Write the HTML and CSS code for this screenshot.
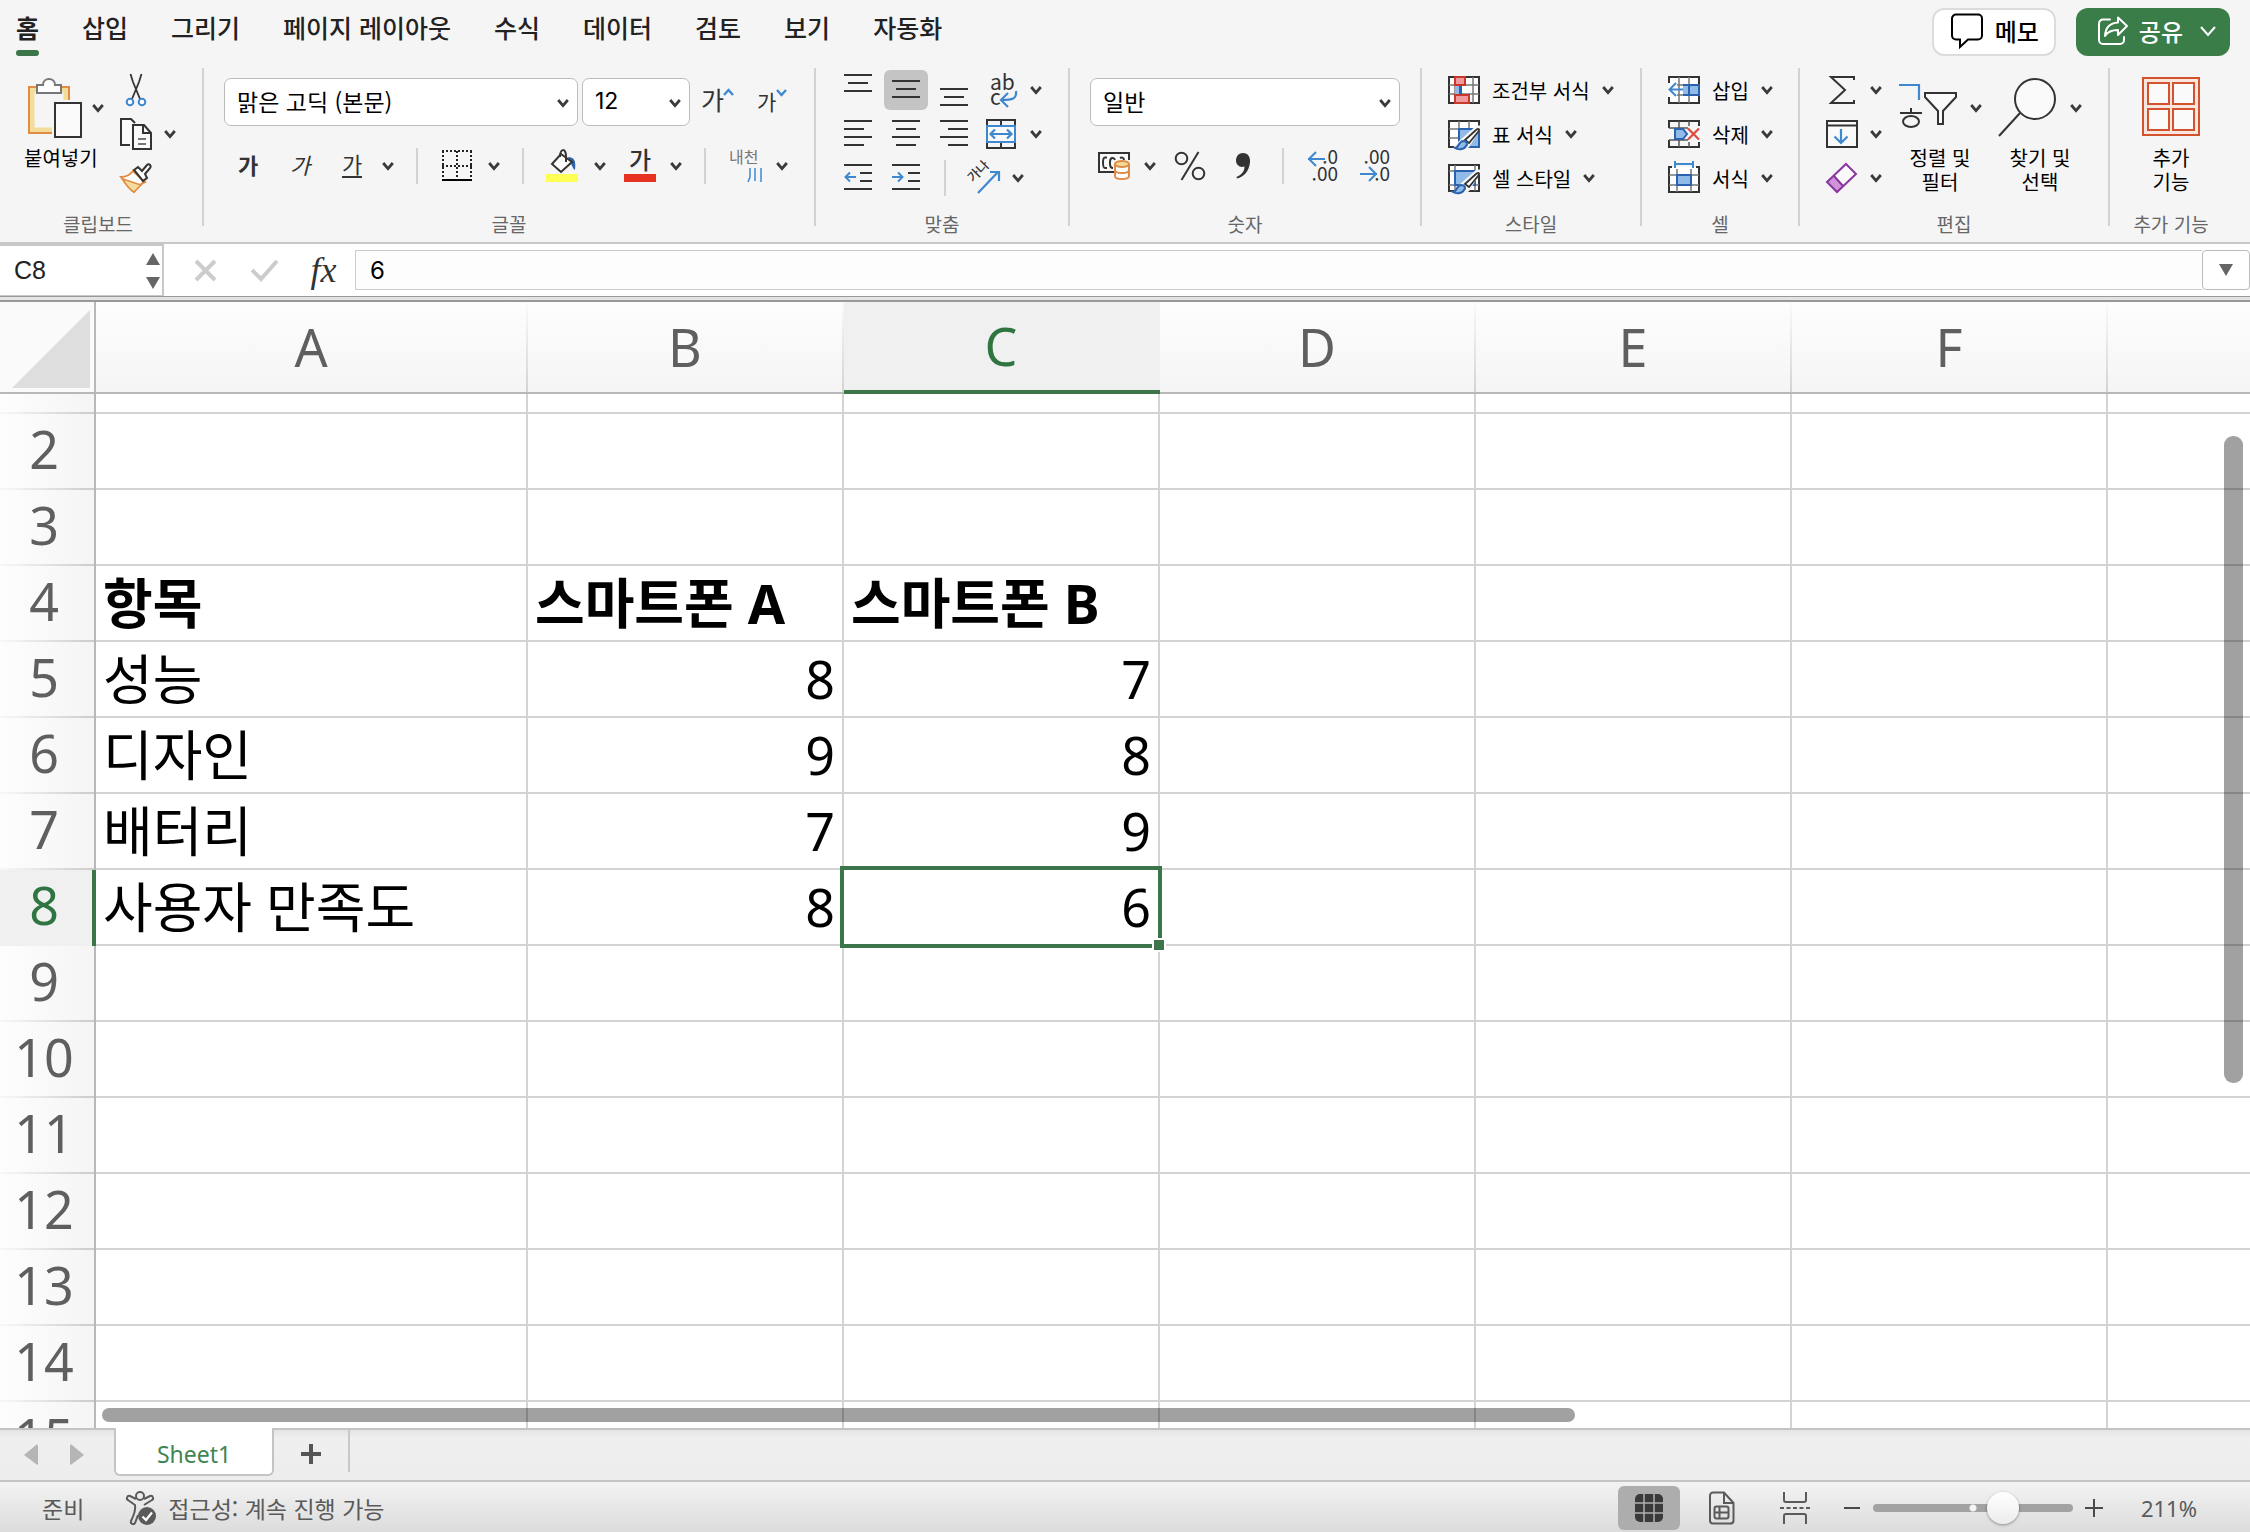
FILE: index.html
```html
<!DOCTYPE html>
<html lang="ko">
<head>
<meta charset="utf-8">
<title>Sheet1</title>
<link rel="stylesheet" href="styles.css">
</head>
<body>
<svg class="defs" aria-hidden="true">
  <symbol id="chev" viewBox="0 0 12 10"><path d="M1.2 2 6 7.600 10.800 2" fill="none" stroke="currentColor" stroke-width="2.800"/></symbol>
</svg>

<header class="topbar">
  <nav class="tabs" role="tablist">
    <button class="tab active" role="tab">홈</button>
    <button class="tab" role="tab">삽입</button>
    <button class="tab" role="tab">그리기</button>
    <button class="tab" role="tab">페이지 레이아웃</button>
    <button class="tab" role="tab">수식</button>
    <button class="tab" role="tab">데이터</button>
    <button class="tab" role="tab">검토</button>
    <button class="tab" role="tab">보기</button>
    <button class="tab" role="tab">자동화</button>
  </nav>
  <div class="actions">
    <button class="pill memo">
      <svg width="32" height="36" viewBox="0 0 32 36"><path d="M5 1.500h22a4 4 0 0 1 4 4v17a4 4 0 0 1-4 4H17l-8 7.500v-7.500H5a4 4 0 0 1-4-4v-17a4 4 0 0 1 4-4z" fill="none" stroke="#000" stroke-width="2"/></svg>
      메모
    </button>
    <button class="pill share">
      <svg width="30" height="30" viewBox="0 0 30 30"><g fill="none" stroke="#fff" stroke-width="2" stroke-linejoin="round" stroke-linecap="round"><path d="M12 3.500H5a4 4 0 0 0-4 4V24a4 4 0 0 0 4 4h17a4 4 0 0 0 4-4v-3"/><path d="M20 1.500 29 10l-9 9v-5c-6 0-10 1-13 6 .5-8 5-13 13-13.500z"/></g></svg>
      공유
      <svg class="share-chev" width="16" height="12" viewBox="0 0 16 12"><path d="M1 2l7 8 7-8" fill="none" stroke="#fff" stroke-width="2"/></svg>
    </button>
  </div>
</header>

<section class="ribbon">
  <div class="group g-clip">
    <div class="controls split">
      <button class="big paste">
        <span class="big-icon">
          <svg width="64" height="60" viewBox="0 0 64 60">
            <path d="M13 12H8v40h20M38 12h4v10" fill="none" stroke="#f4dc9a" stroke-width="5"/>
            <path d="M13 9H5v46h23M37 9h8v13" fill="none" stroke="#df8c45" stroke-width="2"/>
            <path d="M13 15V7h6c0-8 12-8 12 0h6v8z" fill="#fff" stroke="#777" stroke-width="2"/>
            <path d="M31 25h26v34H31z" fill="#fafafa" stroke="#333" stroke-width="2"/>
          </svg>
          <svg class="chev"><use href="#chev"/></svg>
        </span>
        <span>붙여넣기</span>
      </button>
      <div class="stack">
        <button class="ic" aria-label="잘라내기"><svg width="32" height="34" viewBox="0 0 32 34"><path d="M10.500 1 13 9l7 17M21.500 1 19 9l-7 17" fill="none" stroke="#333" stroke-width="1.800"/><g fill="#fff" stroke="#3f88cf" stroke-width="2"><circle cx="10" cy="29" r="3.300"/><circle cx="22" cy="29" r="3.300"/></g></svg></button><span></span>
        <button class="ic" aria-label="복사"><svg width="32" height="34" viewBox="0 0 32 34"><g fill="#fafafa" stroke="#333" stroke-width="2"><path d="M10 28H1V2h10l4 4"/><path d="M13 8h11l7 8v16H13zM23 8v8h8"/></g><path d="M18 22h8M18 27h8" stroke="#777" stroke-width="2"/></svg></button><svg class="chev"><use href="#chev"/></svg>
        <button class="ic" aria-label="서식 복사"><svg width="32" height="32" viewBox="0 0 32 32"><path d="M1 15c5 0 9-2 12-6l12 11c-5 2-8 5-11 10C9 27 5 21 1 15z" fill="#fff" stroke="#df8c45" stroke-width="2"/><path d="M3 17l18 6-7 7C9 27 6 23 3 17z" fill="#f4dc9a" stroke="#df8c45" stroke-width="1.500"/><path d="M14 8l4-3 4 4 5-6c2-2 5 1 3 3l-5 6 2 4-4 3z" fill="#fff" stroke="#333" stroke-width="2"/></svg></button><span></span>
      </div>
    </div>
    <div class="label">클립보드</div>
  </div>
  <div class="divider"></div>

  <div class="group g-font">
    <div class="controls two-row">
      <div class="combos">
        <span class="combo font-name"><select aria-label="글꼴"><option>맑은 고딕 (본문)</option></select><svg class="chev"><use href="#chev"/></svg></span>
        <span class="combo font-size"><select aria-label="글꼴 크기"><option>12</option></select><svg class="chev"><use href="#chev"/></svg></span>
        <button class="ic grow" aria-label="글꼴 크게"><svg width="34" height="30" viewBox="0 0 34 30"><text x="-1" y="23" font-size="25" class="kt">가</text><path d="M22 8l4.500-5L31 8" fill="none" stroke="#3f88cf" stroke-width="2.400"/></svg></button>
        <button class="ic" aria-label="글꼴 작게"><svg width="32" height="30" viewBox="0 0 32 30"><text x="-1" y="23" font-size="21" class="kt">가</text><path d="M19 3l4.500 5L28 3" fill="none" stroke="#3f88cf" stroke-width="2.400"/></svg></button>
      </div>
      <div class="font-row">
        <button class="ic ga b">가</button>
        <button class="ic ga i">가</button>
        <button class="ic ga u"><span>가</span></button>
        <svg class="chev"><use href="#chev"/></svg>
        <i class="sep"></i>
        <button class="ic" aria-label="테두리"><svg width="30" height="32" viewBox="0 0 30 32"><path d="M0 1h30M0 16h30M1 1v28M15 1v28M29 1v28" stroke="#222" stroke-width="2" stroke-dasharray="2 2" fill="none"/><path d="M0 30h30" stroke="#000" stroke-width="2"/></svg></button>
        <svg class="chev"><use href="#chev"/></svg>
        <i class="sep"></i>
        <button class="ic" aria-label="채우기 색"><svg width="32" height="34" viewBox="0 0 32 34"><path d="M0 25h32v8H0z" fill="#ffff54"/><path d="M22 8c7 0 8 5 7 13-3-2-3-6-5-8z" fill="#2b62ad"/><path d="M6 15 15 5l11 8-11 10z" fill="#fafafa" stroke="#333" stroke-width="2"/><path d="M14 8c0-9 6-9 6-1v6" fill="none" stroke="#333" stroke-width="2"/></svg></button>
        <svg class="chev"><use href="#chev"/></svg>
        <button class="ic" aria-label="글꼴 색"><svg width="32" height="34" viewBox="0 0 32 34"><path d="M0 25h32v8H0z" fill="#e83323"/><text x="5" y="20" font-size="24" font-weight="500" class="kt">가</text></svg></button>
        <svg class="chev"><use href="#chev"/></svg>
        <i class="sep"></i>
        <button class="ic" aria-label="윗주"><svg width="36" height="36" viewBox="0 0 36 36"><text x="1" y="15" font-size="16" class="kt light">내천</text><path d="M22 20v9l-2 5M27 20v13M33 20v14" fill="none" stroke="#3f88cf" stroke-width="1.500"/></svg></button>
        <svg class="chev"><use href="#chev"/></svg>
      </div>
    </div>
    <div class="label">글꼴</div>
  </div>
  <div class="divider"></div>

  <div class="group g-align">
    <div class="controls align">
      <div class="arow">
        <button class="ic" aria-label="위쪽 맞춤"><svg class="ln" width="28" height="32" viewBox="0 0 28 32"><path d="M0 1h28M4 9h20M0 17h28"/></svg></button>
        <button class="ic on" aria-label="가운데 맞춤"><svg class="ln" width="28" height="32" viewBox="0 0 28 32"><path d="M0 7h28M4 15h20M0 23h28"/></svg></button>
        <button class="ic" aria-label="아래쪽 맞춤"><svg class="ln" width="28" height="32" viewBox="0 0 28 32"><path d="M0 15h28M4 23h20M0 31h28"/></svg></button>
        <button class="ic wide" aria-label="줄 바꿈"><svg width="30" height="36" viewBox="0 0 30 36"><text x="4" y="18" font-size="21" class="lt">ab</text><text x="4" y="33" font-size="21" class="lt">c</text><path d="M30 19c1 8-4 9-14 9M22 21l-7 7 7 7" fill="none" stroke="#3f88cf" stroke-width="2.200"/></svg></button>
        <svg class="chev"><use href="#chev"/></svg>
      </div>
      <div class="arow">
        <button class="ic" aria-label="왼쪽 맞춤"><svg class="ln" width="28" height="32" viewBox="0 0 28 32"><path d="M0 3h28M0 11h20M0 19h28M0 27h20"/></svg></button>
        <button class="ic" aria-label="가로 가운데"><svg class="ln" width="28" height="32" viewBox="0 0 28 32"><path d="M0 3h28M4 11h20M0 19h28M4 27h20"/></svg></button>
        <button class="ic" aria-label="오른쪽 맞춤"><svg class="ln" width="28" height="32" viewBox="0 0 28 32"><path d="M0 3h28M8 11h20M0 19h28M8 27h20"/></svg></button>
        <button class="ic wide" aria-label="병합"><svg width="30" height="30" viewBox="0 0 30 30"><path d="M1 1h28v28H1zM15 1v28" fill="none" stroke="#333" stroke-width="2"/><path d="M1 7h28v16H1z" fill="#fafafa" stroke="#3f88cf" stroke-width="2"/><path d="M5 15h20M9 10.500 4.500 15 9 19.500M21 10.500l4.500 4.500-4.500 4.500" fill="none" stroke="#3f88cf" stroke-width="2.200"/></svg></button>
        <svg class="chev"><use href="#chev"/></svg>
      </div>
      <div class="arow r3">
        <button class="ic" aria-label="내어쓰기"><svg class="ln" width="28" height="30" viewBox="0 0 28 30"><path d="M0 2h28M16 10h12M16 18h12M0 26h28"/><path class="bl" d="M2 14h10M6 9.500 1.500 14 6 18.500"/></svg></button>
        <button class="ic" aria-label="들여쓰기"><svg class="ln" width="28" height="30" viewBox="0 0 28 30"><path d="M0 2h28M16 10h12M16 18h12M0 26h28"/><path class="bl" d="M0 14h10M6 9.500l4.500 4.500L6 18.500"/></svg></button>
        <i class="sep"></i>
        <button class="ic" aria-label="방향"><svg width="36" height="34" viewBox="0 0 36 34"><text transform="translate(7 22) rotate(-45)" font-size="13" font-weight="500" class="kt">가나</text><path d="M12 32 32 11M24 11h9v9" fill="none" stroke="#3f88cf" stroke-width="2.200"/></svg></button>
        <svg class="chev"><use href="#chev"/></svg>
      </div>
    </div>
    <div class="label">맞춤</div>
  </div>
  <div class="divider"></div>

  <div class="group g-num">
    <div class="controls two-row">
      <div class="combos">
        <span class="combo num-format"><select aria-label="표시 형식"><option>일반</option></select><svg class="chev"><use href="#chev"/></svg></span>
      </div>
      <div class="num-row">
        <button class="ic" aria-label="통화"><svg width="32" height="28" viewBox="0 0 32 28"><path d="M16 20H1V1h30v7" fill="#fafafa" stroke="#333" stroke-width="2"/><path d="M9 5.500H7C5 5.500 5 8 5 10.500s0 5.500 2 5.500h2M17 8c-1-3-5-3-5 2v2c0 3 1 4 3 4M22 6c2-1 4 0 4 2" fill="none" stroke="#333" stroke-width="2"/><path d="M17 12v12c0 4 14 4 14 0V12" fill="#fff" stroke="#df8c45" stroke-width="2"/><ellipse cx="24" cy="12" rx="7" ry="3" fill="#f4dc9a" stroke="#df8c45" stroke-width="2"/><path d="M17 18c0 4 14 4 14 0" fill="none" stroke="#df8c45" stroke-width="2"/></svg></button>
        <svg class="chev"><use href="#chev"/></svg>
        <button class="ic" aria-label="백분율"><svg width="32" height="30" viewBox="0 0 32 30"><g fill="none" stroke="#333" stroke-width="2"><circle cx="7.500" cy="7.500" r="5.800"/><circle cx="24.500" cy="22.500" r="5.800"/><path d="M24.500 1 7.500 29"/></g></svg></button>
        <button class="ic" aria-label="쉼표"><svg width="16" height="26" viewBox="0 0 16 26"><path d="M8 0c5 0 7.500 4 7 9.500C14 18 9 24 2 25.500l-.5-1.500C7 21.500 9.500 18 9.500 13.500 5 15 1 12 1 7.500 1 3 4 0 8 0z" fill="#333"/></svg></button>
        <i class="sep"></i>
        <button class="ic" aria-label="자릿수 늘림"><svg width="32" height="34" viewBox="0 0 32 34"><text x="31" y="15" font-size="19" text-anchor="end" class="lt">.0</text><text x="31" y="32" font-size="19" text-anchor="end" class="lt">.00</text><path d="M1 10h17M9 3 2 10l7 7" fill="none" stroke="#3f88cf" stroke-width="2"/></svg></button>
        <button class="ic" aria-label="자릿수 줄임"><svg width="32" height="34" viewBox="0 0 32 34"><text x="31" y="15" font-size="19" text-anchor="end" class="lt">.00</text><text x="31" y="32" font-size="19" text-anchor="end" class="lt">.0</text><path d="M1 25h17M10 18l7 7-7 7" fill="none" stroke="#3f88cf" stroke-width="2"/></svg></button>
      </div>
    </div>
    <div class="label">숫자</div>
  </div>
  <div class="divider"></div>

  <div class="group g-style">
    <div class="controls list">
      <button class="li"><svg width="32" height="28" viewBox="0 0 32 28"><path d="M1 1h30v26H1z" fill="#fff" stroke="#333" stroke-width="2"/><path d="M1 9h30M1 18h30M7 1v26M25 1v26" stroke="#777" stroke-width="1.500"/><path d="M7 9h7v9H7z" fill="#90bbe8"/><path d="M11 9h3v9h-3z" fill="#2b62ad"/><path d="M7 1h10v8H7zM7 19h14v8H7z" fill="#f09aa0" stroke="#c8372a" stroke-width="2"/></svg>조건부 서식<svg class="chev"><use href="#chev"/></svg></button>
      <button class="li"><svg width="32" height="32" viewBox="0 0 32 32"><path d="M1 3h30v26H1z" fill="#fff" stroke="#333" stroke-width="2"/><path d="M1 11h30M1 20h30M11 3v26M21 3v26" stroke="#777" stroke-width="1.500"/><path d="M11 11h20v18H11z" fill="#90bbe8" stroke="#2b62ad" stroke-width="2"/><path d="M32 9 20 28l-6 3H6l5-6L29 9z" fill="#f5f5f5" stroke="#f5f5f5" stroke-width="3"/><path d="M17 22 28 12c3-2 4-1 2 2L21 25z" fill="#fff" stroke="#333" stroke-width="1.800"/><path d="M7 30c4 0 3-6 8-7 4 0 5 3 3 5-2 4-8 4-11 2z" fill="#90bbe8" stroke="#2b62ad" stroke-width="2"/></svg>표 서식<svg class="chev"><use href="#chev"/></svg></button>
      <button class="li"><svg width="32" height="32" viewBox="0 0 32 32"><path d="M1 3h30v26H1z" fill="#fff" stroke="#333" stroke-width="2"/><path d="M1 9h30M1 23h30M7 3v26M27 3v26" stroke="#777" stroke-width="1.500"/><path d="M7 9h20v14H7z" fill="#90bbe8" stroke="#2b62ad" stroke-width="2"/><path d="M32 9 20 28l-6 3H6l5-6L29 9z" fill="#f5f5f5" stroke="#f5f5f5" stroke-width="3"/><path d="M17 22 28 12c3-2 4-1 2 2L21 25z" fill="#fff" stroke="#333" stroke-width="1.800"/><path d="M5 30c4 0 3-6 8-7 4 0 5 3 3 5-2 4-8 4-11 2z" fill="#90bbe8" stroke="#2b62ad" stroke-width="2"/></svg>셀 스타일<svg class="chev"><use href="#chev"/></svg></button>
    </div>
    <div class="label">스타일</div>
  </div>
  <div class="divider"></div>

  <div class="group g-cell">
    <div class="controls list">
      <button class="li"><svg width="32" height="28" viewBox="0 0 32 28"><path d="M1 7V1h30v26H1v-6" fill="#fff" stroke="#333" stroke-width="2"/><path d="M1 9h30M1 19h30M11 1v26M21 1v26" stroke="#777" stroke-width="1.500"/><path d="M15 9h16v10H15z" fill="#90bbe8"/><path d="M15 9h16v10H15M21 9v10" fill="none" stroke="#2b62ad" stroke-width="2"/><path d="M0 8h9v12H0z" fill="#fff"/><path d="M2 13.500h13M8 7l-6.500 6.500L8 20" fill="none" stroke="#3f88cf" stroke-width="2"/></svg>삽입<svg class="chev"><use href="#chev"/></svg></button>
      <button class="li"><svg width="32" height="28" viewBox="0 0 32 28"><path d="M1 8V1h30v5M1 20v7h30v-5" fill="none" stroke="#333" stroke-width="2"/><path d="M1 8h19M1 20h19M11 1v7M21 1v5M11 20v7M21 22v5" stroke="#555" stroke-width="1.500"/><path d="M7 9h8l4 5-4 5H7z" fill="#90bbe8" stroke="#2b62ad" stroke-width="2"/><path d="M20 8.500 31 19.500M31 8.500 20 19.500" stroke="#dc4a40" stroke-width="2.200"/></svg>삭제<svg class="chev"><use href="#chev"/></svg></button>
      <button class="li"><svg width="32" height="34" viewBox="0 0 32 34"><path d="M1 6h30v25H1z" fill="#fff"/><path d="M4 6H1v25h30V6h-3" fill="none" stroke="#333" stroke-width="2"/><path d="M1 14h30M1 24h30M9 8v23M23 8v23" stroke="#777" stroke-width="1.500"/><path d="M9 14h14v10H9z" fill="#90bbe8" stroke="#2b62ad" stroke-width="2"/><path d="M7 3h18M7 0v7M25 0v7" stroke="#3f88cf" stroke-width="2"/></svg>서식<svg class="chev"><use href="#chev"/></svg></button>
    </div>
    <div class="label">셀</div>
  </div>
  <div class="divider"></div>

  <div class="group g-edit">
    <div class="controls split">
      <div class="stack">
        <button class="ic" aria-label="합계"><svg width="32" height="28" viewBox="0 0 32 28"><path d="M28 4V1H5l14 13L5 27h23v-3" fill="none" stroke="#333" stroke-width="2"/></svg></button><svg class="chev"><use href="#chev"/></svg>
        <button class="ic" aria-label="채우기"><svg width="32" height="28" viewBox="0 0 32 28"><path d="M1 1h30v26H1zM1 5.500h30" fill="#fafafa" stroke="#333" stroke-width="2"/><path d="M15 9v14M8.500 16.500 15 23l6.500-6.500" fill="none" stroke="#3f88cf" stroke-width="2.200"/></svg></button><svg class="chev"><use href="#chev"/></svg>
        <button class="ic" aria-label="지우기"><svg width="32" height="32" viewBox="0 0 32 32"><path d="M20 2 30 12 11 30 1 20z" fill="#fafafa"/><path d="M8 14l9 10-6 6L1 20z" fill="#cf95d8"/><path d="M20 2 30 12 11 30 1 20zM8 14l9 10" fill="none" stroke="#8a35a0" stroke-width="2"/></svg></button><svg class="chev"><use href="#chev"/></svg>
      </div>
      <button class="big">
        <span class="big-icon">
          <svg width="60" height="60" viewBox="0 0 60 60"><path d="M1 7h20v15" fill="none" stroke="#3f88cf" stroke-width="2.200"/><path d="M13 30v5M2 35h22" stroke="#333" stroke-width="2"/><ellipse cx="13" cy="43.500" rx="8" ry="5.500" fill="none" stroke="#333" stroke-width="2"/><path d="M27 15h31v4L45 33v13h-5V33L27 19z" fill="#fafafa" stroke="#333" stroke-width="2"/></svg>
          <svg class="chev"><use href="#chev"/></svg>
        </span>
        <span>정렬 및<br>필터</span>
      </button>
      <button class="big">
        <span class="big-icon">
          <svg width="60" height="60" viewBox="0 0 60 60"><circle cx="37" cy="21" r="20" fill="#fafafa" stroke="#333" stroke-width="2"/><path d="M22 35 1 58" stroke="#333" stroke-width="2"/></svg>
          <svg class="chev"><use href="#chev"/></svg>
        </span>
        <span>찾기 및<br>선택</span>
      </button>
    </div>
    <div class="label">편집</div>
  </div>
  <div class="divider"></div>

  <div class="group g-add">
    <div class="controls split center">
      <button class="big">
        <span class="big-icon"><svg width="58" height="60" viewBox="0 0 58 60"><g fill="#fafafa" stroke="#d3532e" stroke-width="2"><path d="M1 0h56v57H1z" fill="#f9e6de"/><path d="M6 5h21v21H6zM31 5h21v21H31zM6 31h21v21H6zM31 31h21v21H31z"/></g></svg></span>
        <span>추가<br>기능</span>
      </button>
    </div>
    <div class="label">추가 기능</div>
  </div>
</section>

<section class="formula">
  <div class="namebox">
    <input value="C8" aria-label="이름 상자">
    <svg width="14" height="36" viewBox="0 0 14 36"><path d="M7 0l7 12H0zM7 36l7-12H0z" fill="#666"/></svg>
  </div>
  <button class="fbtn" aria-label="취소"><svg width="24" height="24" viewBox="0 0 24 24"><path d="M2 3l19 19M21 3 2 22" stroke="#ccc" stroke-width="4"/></svg></button>
  <button class="fbtn" aria-label="입력"><svg width="30" height="24" viewBox="0 0 30 24"><path d="M2 12l9 9L27 3" fill="none" stroke="#ccc" stroke-width="4"/></svg></button>
  <button class="fbtn fx">fx</button>
  <input class="finput" value="6" aria-label="수식">
  <button class="expand" aria-label="확장"><svg width="14" height="12" viewBox="0 0 14 12"><path d="M0 0h14L7 12z" fill="#666"/></svg></button>
</section>

<main class="sheet">
  <table>
    <colgroup><col class="c-head"><col class="c-a"><col class="c"><col class="c"><col class="c"><col class="c"><col class="c"><col></colgroup>
    <thead><tr><th class="corner"><svg width="78" height="78" viewBox="0 0 78 78"><path d="M78 0v78H0z" fill="#dedede"/></svg></th><th>A</th><th>B</th><th class="sel">C</th><th>D</th><th>E</th><th>F</th><th></th></tr></thead>
    <tbody>
      <tr class="cut"><th></th><td></td><td></td><td></td><td></td><td></td><td></td><td></td></tr>
      <tr><th>2</th><td></td><td></td><td></td><td></td><td></td><td></td><td></td></tr>
      <tr><th>3</th><td></td><td></td><td></td><td></td><td></td><td></td><td></td></tr>
      <tr class="bold"><th>4</th><td>항목</td><td>스마트폰 A</td><td>스마트폰 B</td><td></td><td></td><td></td><td></td></tr>
      <tr><th>5</th><td>성능</td><td class="n">8</td><td class="n">7</td><td></td><td></td><td></td><td></td></tr>
      <tr><th>6</th><td>디자인</td><td class="n">9</td><td class="n">8</td><td></td><td></td><td></td><td></td></tr>
      <tr><th>7</th><td>배터리</td><td class="n">7</td><td class="n">9</td><td></td><td></td><td></td><td></td></tr>
      <tr><th class="sel">8</th><td>사용자 만족도</td><td class="n">8</td><td class="n active-cell">6</td><td></td><td></td><td></td><td></td></tr>
      <tr><th>9</th><td></td><td></td><td></td><td></td><td></td><td></td><td></td></tr>
      <tr><th>10</th><td></td><td></td><td></td><td></td><td></td><td></td><td></td></tr>
      <tr><th>11</th><td></td><td></td><td></td><td></td><td></td><td></td><td></td></tr>
      <tr><th>12</th><td></td><td></td><td></td><td></td><td></td><td></td><td></td></tr>
      <tr><th>13</th><td></td><td></td><td></td><td></td><td></td><td></td><td></td></tr>
      <tr><th>14</th><td></td><td></td><td></td><td></td><td></td><td></td><td></td></tr>
      <tr><th>15</th><td></td><td></td><td></td><td></td><td></td><td></td><td></td></tr>
    </tbody>
  </table>
  <div class="vbar"></div>
  <div class="hbar"></div>
</main>

<div class="sheettabs">
  <button class="nav-btn" aria-label="이전 시트"><svg width="14" height="22" viewBox="0 0 14 22"><path d="M14 2v18c0 1-1 1-2 0L0 11 12 1c1-1 2 0 2 1z" fill="#b5b5b5"/></svg></button>
  <button class="nav-btn" aria-label="다음 시트"><svg width="14" height="22" viewBox="0 0 14 22"><path d="M0 2v18c0 1 1 1 2 0l12-9L2 1C1 0 0 1 0 2z" fill="#b5b5b5"/></svg></button>
  <button class="sheet-tab">Sheet1</button>
  <button class="add" aria-label="시트 추가"><svg width="20" height="20" viewBox="0 0 20 20"><path d="M10 0v20M0 10h20" stroke="#555" stroke-width="4"/></svg></button>
</div>

<footer class="status">
  <span class="ready">준비</span>
  <svg width="30" height="36" viewBox="0 0 30 36"><g fill="none" stroke="#5a5a5a" stroke-width="2"><circle cx="14" cy="6" r="4"/><path d="M10 9 4 6C1 5 0 9 2 10l7 5c1 5-1 10-4 16-1 3 3 4 4 2l3-8M18 9l6-3c3-1 4 3 2 4l-8 5"/></g><circle cx="21" cy="26" r="9" fill="#5a5a5a"/><path d="M16.500 26.500l3.500 3.500 6-7.500" fill="none" stroke="#fff" stroke-width="2.200"/></svg>
  <span class="a11y">접근성: 계속 진행 가능</span>
  <div class="views">
    <button class="view on" aria-label="기본"><svg width="28" height="28" viewBox="0 0 28 28"><rect width="28" height="28" rx="5" fill="#3a3a3a"/><path d="M9 0v28M19 0v28M0 9h28M0 19h28" stroke="#b0b0b0" stroke-width="1.500"/></svg></button>
    <button class="view" aria-label="페이지 레이아웃"><svg width="26" height="34" viewBox="0 0 26 34"><g fill="none" stroke="#5a5a5a" stroke-width="2"><path d="M4 1.500h11L24.500 12v18a3 3 0 0 1-3 2.500H4a3 3 0 0 1-3-3v-25a3 3 0 0 1 3-3zM15 2v10h9"/><rect x="5.500" y="15.500" width="14" height="12" rx="2"/><path d="M5.500 21.500h14M10.500 16v12"/></g></svg></button>
    <button class="view" aria-label="페이지 나누기"><svg width="30" height="34" viewBox="0 0 30 34"><path d="M4 1v8q0 2 2 2h18q2 0 2-2V1M4 33v-8q0-2 2-2h18q2 0 2 2v8" fill="none" stroke="#5a5a5a" stroke-width="2"/><path d="M0 17h30" stroke="#5a5a5a" stroke-width="2" stroke-dasharray="4 2.500"/></svg></button>
  </div>
  <div class="zoom">
    <button class="zbtn" aria-label="축소"><svg width="18" height="20" viewBox="0 0 18 20"><path d="M1 10h16" stroke="#4a4a4a" stroke-width="2"/></svg></button>
    <input type="range" min="0" max="100" value="68" aria-label="확대/축소">
    <button class="zbtn" aria-label="확대"><svg width="18" height="20" viewBox="0 0 18 20"><path d="M0 10h18M9 1v18" stroke="#4a4a4a" stroke-width="2"/></svg></button>
    <span class="pct">211%</span>
  </div>
</footer>
</body>
</html>
```
FILE: styles.css
```css
*, *::before, *::after { box-sizing: border-box; }
html, body { height: 100%; }
body {
  margin: 0;
  min-height: 100vh;
  display: flex;
  flex-direction: column;
  overflow: hidden;
  background: #f5f5f5;
  color: #000;
  font-family: "Noto Sans CJK KR", sans-serif;
  font-size: 20px;
}
button, input, select {
  margin: 0; padding: 0; border: 0; background: none;
  font: inherit; color: inherit; border-radius: 0;
}
svg { display: block; flex: none; overflow: visible; }
.defs { position: absolute; width: 0; height: 0; }
.chev { width: 12px; height: 10px; color: #3a3a3a; }
.kt { font-family: "Noto Sans CJK KR", sans-serif; fill: #333; }
.kt.light { fill: #777; }
.lt { font-family: "Noto Sans CJK KR", sans-serif; fill: #333; }

/* Menu tabs */
.topbar { display: flex; justify-content: space-between; height: 68px; padding: 8px 20px 12px 16px; flex: none; }
.tabs { display: flex; gap: 43px; align-items: flex-start; }
.tab { display: flex; flex-direction: column; gap: 4px; font-size: 25px; line-height: 38px; font-weight: 500; color: #222; white-space: nowrap; }
.tab.active { font-weight: 700; }
.tab.active::after { content: ""; height: 6px; border-radius: 3px; background: #3b7549; align-self: stretch; }
.actions { display: flex; gap: 20px; }
.pill { display: flex; align-items: center; height: 48px; border-radius: 12px; font-size: 24px; line-height: 32px; font-weight: 500; white-space: nowrap; }
.memo { background: #fff; border: 2px solid #dcdcdc; padding: 0 15px 2px 17px; gap: 12px; }
.share { background: #3a7d49; color: #fff; padding: 0 14px 2px 22px; gap: 11px; }
.share-chev { margin-left: 6px; }

/* Ribbon */
.ribbon { display: flex; flex: none; height: 176px; padding-right: 18px; border-bottom: 2px solid #c8c8c8; }
.divider { width: 2px; height: 158px; background: #d3d3d3; flex: none; }
.group { flex: none; display: flex; flex-direction: column; }
.g-clip { width: 202px; padding-right: 6px; }
.g-font { width: 610px; }
.g-align { width: 252px; }
.g-num { width: 350px; }
.g-style { width: 218px; }
.g-cell { width: 156px; }
.g-edit { width: 308px; }
.g-add { flex: 1; }
.controls { height: 132px; }
.label { padding-top: 10px; line-height: 28px; font-size: 19px; color: #666; text-align: center; }
.ic { display: flex; align-items: center; justify-content: center; }
.sep { width: 2px; height: 36px; background: #d3d3d3; }

.split { display: flex; gap: 16px; padding: 0 0 0 26px; }
.g-clip .split { padding-left: 24px; }
.center { justify-content: center; padding: 0; }
.stack { display: grid; grid-template: repeat(3, 44px) / 32px 12px; column-gap: 12px; align-items: center; }
.big { display: flex; flex-direction: column; gap: 8px; padding-top: 10px; line-height: 24px; text-align: center; white-space: nowrap; }
.big-icon { display: flex; align-items: center; justify-content: center; gap: 12px; height: 60px; }
.paste .big-icon { gap: 4px; }
.paste { text-align: left; }

.two-row { padding: 10px 0 0 20px; }
.combos { display: flex; height: 48px; gap: 4px; margin-bottom: 16px; }
.combo { position: relative; display: flex; }
.combo select { appearance: none; width: 100%; height: 48px; padding: 0 12px 2px; font-size: 23px; background: #fff; border: 1px solid #bcbcbc; border-radius: 7px; }
.combo .chev { position: absolute; right: 9px; top: 20px; }
.font-name { width: 354px; }
.font-size { width: 108px; font-family: Inter, sans-serif; }
.font-size select { font-size: 23px; }
.num-format { width: 310px; }
.grow { padding: 0 18px 0 8px; }
.font-row { display: grid; height: 48px; margin-left: -2px; grid-template-columns: 52px 52px 52px 20px 38px 42px 32px 26px 52px 24px 56px 16px 42px 40px 32px; align-items: center; justify-items: center; }
.num-row { display: grid; height: 48px; grid-template-columns: 48px 24px 56px 50px 30px 50px 54px; align-items: center; justify-items: center; }
.ga { font-size: 22px; line-height: 26px; padding-bottom: 4px; color: #333; }
.b { font-weight: 700; }
.i { font-style: italic; }
.u span { border-bottom: 2px solid #333; }

.align { padding-left: 18px; }
.arow { display: grid; height: 44px; grid-template-columns: 48px 48px 48px 46px 24px; align-items: center; justify-items: center; }
.r3 { grid-template-columns: 48px 48px 30px 48px 20px; }
.on { background: #c4c4c4; border-radius: 6px; width: 44px; height: 40px; }
.ln path { stroke: #333; stroke-width: 2; fill: none; }
.ln .bl { stroke: #3f88cf; stroke-width: 2; }

.list { display: flex; flex-direction: column; padding-left: 26px; }
.li { display: flex; align-items: center; gap: 12px; height: 44px; white-space: nowrap; }

/* Formula bar */
.formula { display: flex; align-items: center; flex: none; height: 58px; background: linear-gradient(#fff 52px, #999 52px 53px, #e4e4e4 53px 56px, #999 56px); padding-bottom: 6px; }
.namebox { display: flex; align-items: center; width: 164px; height: 52px; border: solid #c8c8c8; border-width: 2px 2px 1px 0; padding: 0 2px 0 14px; font-family: "Liberation Sans", sans-serif; font-size: 25px; color: #222; }
.namebox input { flex: 1; min-width: 0; }
.fbtn { display: flex; justify-content: center; width: 59px; }
.namebox + .fbtn { margin-left: 12px; }
.fx { font: italic 400 36px/40px "Liberation Serif", serif; color: #333; }
.finput { flex: 1; height: 40px; border: 1px solid #ccc; border-right: 0; background: #fdfdfd; padding: 0 14px; margin-left: 2px; font: 24px Inter, sans-serif; }
.expand { display: flex; align-items: center; justify-content: center; width: 48px; height: 40px; border: 1px solid #bbb; border-radius: 4px; background: #fff; }

/* Grid */
.sheet { position: relative; flex: 1; min-height: 0; overflow: hidden; background: #fff; font-family: "Noto Sans", "Noto Sans CJK KR", sans-serif; }
table { width: 100%; table-layout: fixed; border-collapse: separate; border-spacing: 0; }
.c-head { width: 96px; }
.c-a { width: 432px; }
.c { width: 316px; }
th, td { height: 76px; padding: 0 7px; line-height: 70px; white-space: nowrap; }
th { font-size: 52px; font-weight: 400; color: #5f5f5f; text-align: center; }
td { position: relative; font-size: 54px; text-align: left; border: solid #d3d3d3; border-width: 0 2px 2px 0; }
td:last-child { border-right: 0; }
thead th { height: 92px; padding: 0 9px 0 7px; border-bottom: 2px solid #b8b8b8; background: linear-gradient(#fafafa, #d3d3d3) right / 2px 100% no-repeat, linear-gradient(#fdfdfd, #f5f5f5); }
thead th:last-child { background: linear-gradient(#fdfdfd, #f5f5f5); }
thead th.corner { padding: 6px 4px 2px 12px; border-right: 2px solid #b8b8b8; background: #fafafa; }
thead th.sel { color: #2f7541; background: #f0f0f0; border-bottom: 4px solid #3b7549; }
tbody th { padding: 0 6px 6px 0; border-right: 2px solid #b8b8b8; background: linear-gradient(to right, #f8f8f8, #ccc) bottom / 100% 2px no-repeat, linear-gradient(to right, #fdfdfd, #f5f5f5); }
tbody th.sel { color: #2f7541; background: #f0f0f0; border-right: 4px solid #3b7549; padding-right: 4px; }
.cut th, .cut td { height: 20px; line-height: 10px; padding: 0; }
.bold td { font-weight: 700; }
.n { font-size: 52px; text-align: right; }
.active-cell::before { content: ""; position: absolute; inset: -4px; border: 4px solid #3b7549; z-index: 1; }
.active-cell::after { content: ""; position: absolute; right: -8px; bottom: -8px; width: 14px; height: 14px; background: #3b7549; border: 2px solid #fff; z-index: 2; }
.vbar, .hbar { position: absolute; background: rgba(0, 0, 0, .37); border-radius: 9px; z-index: 3; }
.vbar { right: 7px; top: 134px; width: 19px; height: 57.5%; }
.hbar { left: 102px; right: 30%; bottom: 6px; height: 14px; }

/* Sheet tabs */
.sheettabs { display: flex; flex: none; height: 54px; border: solid #c4c4c4; border-width: 2px 0; background: linear-gradient(#e4e4e4, #efefef 8px, #ededed); padding-left: 24px; }
.nav-btn { display: flex; align-items: center; width: 46px; }
.sheet-tab { width: 160px; height: 48px; margin: -2px 0 0 -2px; padding-top: 6px; background: #fff; border: 2px solid #c4c4c4; border-top: 0; border-radius: 0 0 6px 6px; font: 23px "Noto Sans", sans-serif; color: #3f8553; }
.add { display: flex; align-items: center; justify-content: center; width: 76px; height: 42px; padding-top: 6px; border-right: 2px solid #c8c8c8; }

/* Status bar */
.status { display: flex; align-items: center; flex: none; height: 50px; background: linear-gradient(#f3f3f3, #dcdcdc); font-size: 23px; color: #5a5a5a; padding: 2px 53px 0 42px; white-space: nowrap; }
.ready { margin-right: 42px; }
.a11y { margin-left: 12px; }
.views { display: flex; gap: 11px; margin-left: auto; margin-right: 17px; }
.view { display: flex; align-items: center; justify-content: center; width: 62px; height: 44px; }
.view.on { background: #adadad; border-radius: 6px; }
.zoom { display: flex; align-items: center; }
.zoom input { appearance: none; width: 200px; height: 32px; margin: 0 12px; background: none; }
.zoom input::-webkit-slider-runnable-track { height: 8px; border-radius: 4px; background: radial-gradient(circle, #f4f4f4 3px, #a2a2a2 4px); }
.zoom input::-webkit-slider-thumb { appearance: none; width: 32px; height: 32px; margin-top: -12px; border-radius: 50%; background: linear-gradient(#fff, #ececec); box-shadow: 0 1px 3px rgba(0, 0, 0, .4); }
.zbtn { display: flex; }
.pct { margin-left: 38px; font: 22px "Noto Sans", sans-serif; }
```
